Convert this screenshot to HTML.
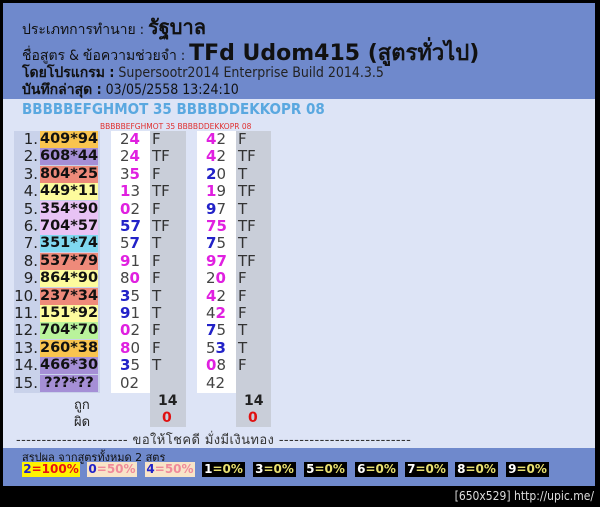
<!DOCTYPE html>
<html><head><meta charset="utf-8"><style>
*{margin:0;padding:0;box-sizing:border-box}
body{width:600px;height:507px;background:#000;position:relative;overflow:hidden;font-family:"DejaVu Sans","Liberation Sans",sans-serif;color:#222}
.a{position:absolute;white-space:nowrap}
#hdr{left:3px;top:3px;width:592px;height:96px;background:#6f89cc}
#bd{left:3px;top:99px;width:592px;height:349px;background:#dde4f6}
#ft{left:3px;top:448px;width:592px;height:38px;background:#6f89cc}
.h{font-size:14px;color:#111;font-family:"DejaVu Sans Condensed","DejaVu Sans",sans-serif}
.m{color:#e020e0}.b{color:#2222c8}.g{color:#444}
.num{font-size:15px;width:34px;text-align:right;left:4px;color:#222}
.code{font-size:14.5px;font-weight:bold;left:40px;width:58px;height:17px;text-align:center;color:#111;line-height:17px}
.c{font-size:15px;line-height:17px}
.bg{font-size:12px;font-weight:bold;height:15px;line-height:15px;text-align:center}
</style></head><body>
<div class="a" id="hdr"></div>
<div class="a" id="bd"></div>
<div class="a" id="ft"></div>
<div class="a h" style="left:22px;top:11px">ประเภทการทำนาย : <b style="font-size:20px">รัฐบาล</b></div>
<div class="a h" style="left:22px;top:35px">ชื่อสูตร &amp; ข้อความช่วยจำ : <b style="font-size:22px;font-family:'DejaVu Sans',sans-serif">TFd Udom415 (สูตรทั่วไป)</b></div>
<div class="a h" style="left:22px;top:62px"><b>โดยโปรแกรม :</b> <span style="color:#222">Supersootr2014 Enterprise Build 2014.3.5</span></div>
<div class="a h" style="left:22px;top:79px"><b>บันทึกล่าสุด :</b> 03/05/2558 13:24:10</div>
<div class="a" style="left:22px;top:100px;font-size:15px;font-weight:bold;color:#5aa8e0;font-family:'DejaVu Sans Condensed',sans-serif">BBBBBEFGHMOT 35 BBBBDDEKKOPR 08</div>
<div class="a" style="left:100px;top:122px;font-size:7.5px;color:#e03030">BBBBBEFGHMOT 35 BBBBDDEKKOPR 08</div>
<div class="a" style="left:14px;top:131px;width:86px;height:262px;background:#c9d2ea"></div>
<div class="a" style="left:111px;top:131px;width:39px;height:262px;background:#fff"></div>
<div class="a" style="left:150px;top:131px;width:36px;height:296px;background:#c9ced9"></div>
<div class="a" style="left:197px;top:131px;width:39px;height:262px;background:#fff"></div>
<div class="a" style="left:236px;top:131px;width:35px;height:296px;background:#c9ced9"></div>
<div id="rows"></div>
<div class="a" style="left:74px;top:394px;font-size:13px">ถูก</div>
<div class="a" style="left:74px;top:411px;font-size:13px">ผิด</div>
<div class="a" style="left:158px;top:393px;font-size:14px;font-weight:bold">14</div>
<div class="a" style="left:244px;top:393px;font-size:14px;font-weight:bold">14</div>
<div class="a" style="left:162px;top:410px;font-size:14px;font-weight:bold;color:#e01010">0</div>
<div class="a" style="left:248px;top:410px;font-size:14px;font-weight:bold;color:#e01010">0</div>
<div class="a" style="left:16px;top:429px;font-size:13px;color:#333;letter-spacing:0.4px">---------------------- ขอให้โชคดี มั่งมีเงินทอง --------------------------</div>
<div class="a" style="left:22px;top:448px;font-size:11px;color:#111">สรุปผล จากสูตรทั้งหมด 2 สูตร</div>
<div class="a bg" style="left:22px;top:462px;width:58px;background:#fff200"><span class="b">2</span><span style="color:#e81010">=100%</span></div>
<div class="a bg" style="left:87px;top:462px;width:50px;background:#f8e4c8"><span class="b">0</span><span style="color:#f08a9a">=50%</span></div>
<div class="a bg" style="left:145px;top:462px;width:50px;background:#f8e4c8"><span class="b">4</span><span style="color:#f08a9a">=50%</span></div>
<div id="blk"></div>
<div class="a" style="right:6px;top:489px;font-size:12px;color:#ddd;font-family:'DejaVu Sans Condensed',sans-serif">[650x529] http://upic.me/</div>
<script>
var colors=["#f9c44e","#a58fd6","#ee8a7a","#fdfb9d","#e8c3f5","#e8c3f5","#7fd8f0","#ee8a7a","#fdfb9d","#ee8a7a","#fdfb9d","#b9f39b","#f9c44e","#a58fd6","#a58fd6"];
var codes=["409*94","608*44","804*25","449*11","354*90","704*57","351*74","537*79","864*90","237*34","151*92","704*70","260*38","466*30","???*??"];
var c1=[["g2","m4"],["g2","m4"],["g3","m5"],["m1","g3"],["m0","g2"],["b5","b7"],["g5","b7"],["m9","g1"],["g8","m0"],["b3","g5"],["b9","g1"],["m0","g2"],["m8","g0"],["b3","g5"],["g0","g2"]];
var c2=[["m4","g2"],["m4","g2"],["b2","g0"],["m1","g9"],["b9","g7"],["m7","m5"],["b7","g5"],["m9","m7"],["g2","m0"],["m4","g2"],["g4","m2"],["b7","g5"],["g5","b3"],["m0","g8"],["g4","g2"]];
var l1=["F","TF","F","TF","F","TF","T","F","F","T","T","F","F","T",""];
var l2=["F","TF","T","TF","T","TF","T","TF","F","F","F","T","T","F",""];
function d(p){return p.map(function(x){var cl=x[0];var bold=cl!="g"?"font-weight:bold":"";return '<span class="'+cl+'" style="'+bold+'">'+x[1]+'</span>'}).join("")}
var h="";
for(var i=0;i<15;i++){var y=131+i*17.4;
h+='<div class="a num c" style="top:'+y+'px">'+(i+1)+'.</div>';
h+='<div class="a code" style="top:'+y+'px;background:'+colors[i]+'">'+codes[i]+'</div>';
h+='<div class="a c" style="left:120px;top:'+y+'px">'+d(c1[i])+'</div>';
h+='<div class="a c" style="left:152px;top:'+y+'px;color:#333">'+l1[i]+'</div>';
h+='<div class="a c" style="left:206px;top:'+y+'px">'+d(c2[i])+'</div>';
h+='<div class="a c" style="left:238px;top:'+y+'px;color:#333">'+l2[i]+'</div>';}
document.getElementById("rows").outerHTML=h;
var xs=[202,253,304,355,405,455,506],n=[1,3,5,6,7,8,9],b="";
for(var j=0;j<7;j++)b+='<div class="a bg" style="left:'+xs[j]+'px;top:462px;width:43px;background:#000"><span style="color:#fff">'+n[j]+'</span><span style="color:#e8e070">=0%</span></div>';
document.getElementById("blk").outerHTML=b;
</script>
</body></html>
